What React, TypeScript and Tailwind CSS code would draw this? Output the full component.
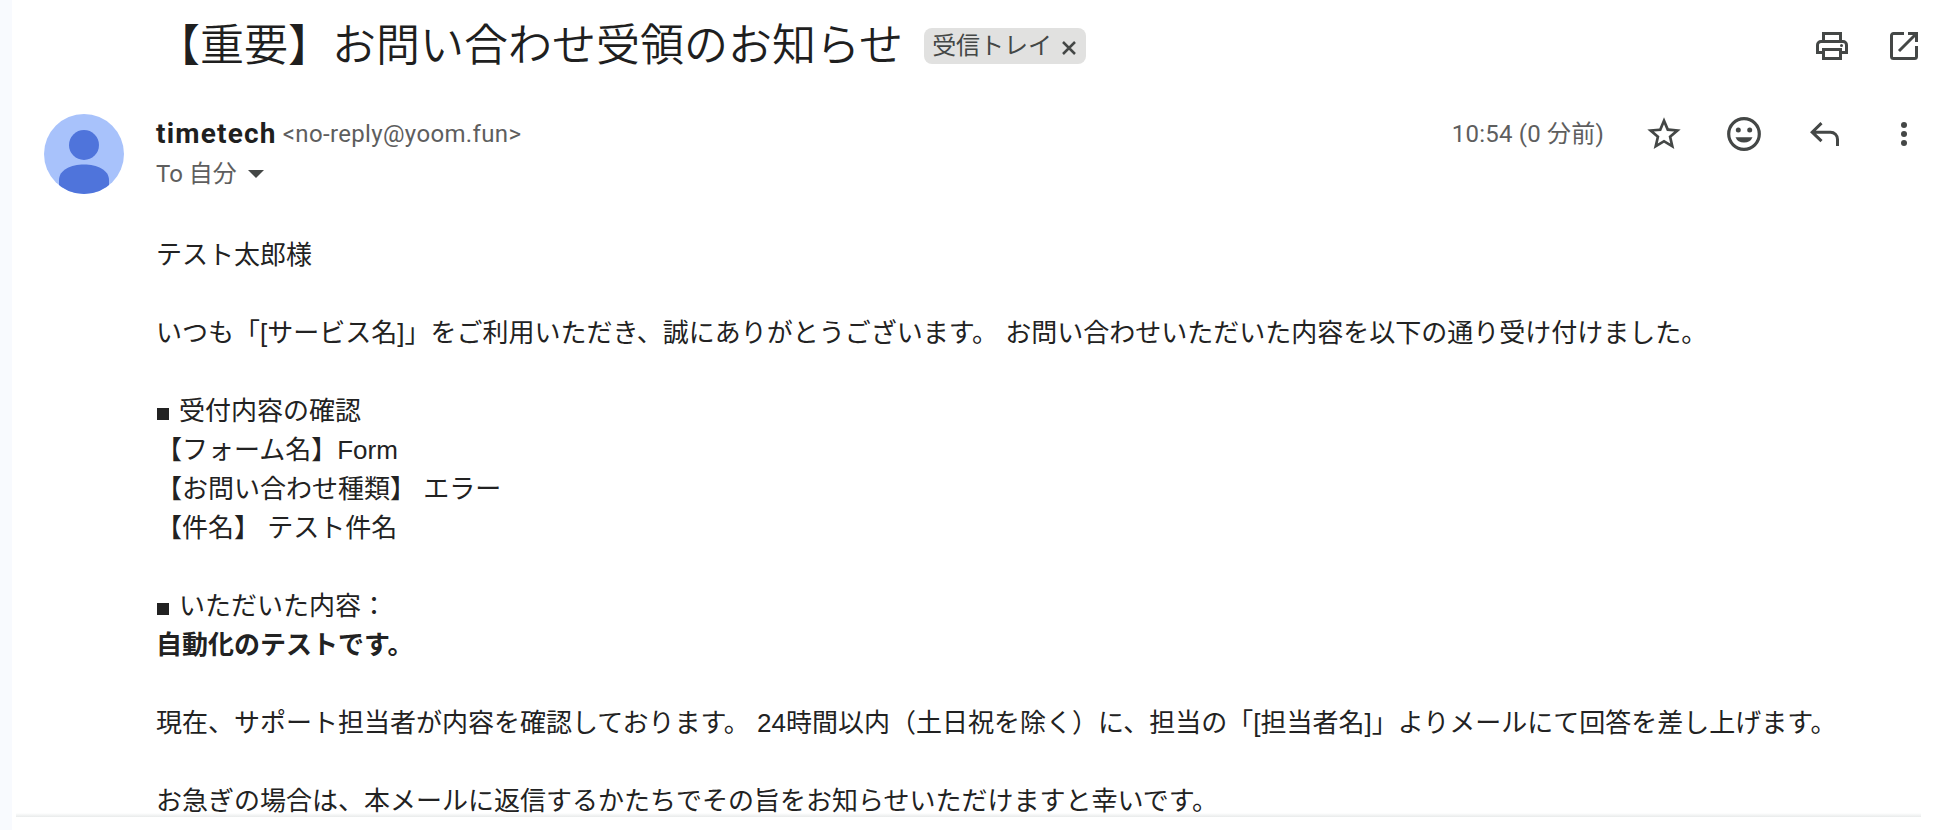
const bodyLines = [
  { text: "テスト太郎様" },
  { text: "" },
  {
    text: "いつも「[サービス名]」をご利用いただき、誠にありがとうございます。 お問い合わせいただいた内容を以下の通り受け付けました。",
  },
  { text: "" },
  { text: "受付内容の確認", marker: true },
  { text: "【フォーム名】Form" },
  { text: "【お問い合わせ種類】 エラー" },
  { text: "【件名】 テスト件名" },
  { text: "" },
  { text: "いただいた内容：", marker: true },
  { text: "自動化のテストです。", bold: true },
  { text: "" },
  {
    text: "現在、サポート担当者が内容を確認しております。 24時間以内（土日祝を除く）に、担当の「[担当者名]」よりメールにて回答を差し上げます。",
  },
  { text: "" },
  { text: "お急ぎの場合は、本メールに返信するかたちでその旨をお知らせいただけますと幸いです。" },
]

function Avatar() {
  return (
    <svg viewBox="0 0 80 80" className="h-20 w-20 shrink-0">
      <clipPath id="avatar">
        <circle cx="40" cy="40" r="40" />
      </clipPath>
      <g clipPath="url(#avatar)">
        <rect width="80" height="80" fill="#a8c2fb" />
        <circle cx="40" cy="31" r="15" fill="#4f74db" />
        <path d="M15 80V66c0-10 12-15.500 25-15.500S65 56 65 66v14z" fill="#4f74db" />
      </g>
    </svg>
  )
}

function PrintIcon() {
  return (
    <svg viewBox="0 0 32 28" className="h-7 w-8" fill="none" stroke="currentColor" strokeWidth="3">
      <path d="M7.500 9V1.500h17V9" />
      <path d="M7.500 20.500h-6V13a3.500 3.500 0 0 1 3.500-3.500h22a3.500 3.500 0 0 1 3.500 3.500v7.500h-6" />
      <path d="M7.500 17.500h17v9h-17z" />
      <circle cx="25.500" cy="13.500" r="1.500" fill="currentColor" stroke="none" />
    </svg>
  )
}

function OpenIcon() {
  return (
    <svg viewBox="0 0 28 28" className="h-7 w-7" fill="none" stroke="currentColor" strokeWidth="3">
      <path d="M14 1.500H3.500a2 2 0 0 0-2 2v21a2 2 0 0 0 2 2h21a2 2 0 0 0 2-2V14" />
      <path d="M18 1.500h8.500V10M26 2L9 19" />
    </svg>
  )
}

function StarIcon() {
  return (
    <svg viewBox="0 0 24 24" className="h-10 w-10" fill="currentColor">
      <path d="M22 9.240l-7.190-.620L12 2 9.190 8.630 2 9.240l5.460 4.730L5.820 21 12 17.270 18.180 21l-1.630-7.030L22 9.240zM12 15.400l-3.760 2.270 1-4.280-3.320-2.880 4.380-.380L12 6.100l1.710 4.040 4.380.380-3.320 2.880 1 4.280L12 15.400z" />
    </svg>
  )
}

function SmileIcon() {
  return (
    <svg viewBox="0 0 34 34" className="h-[34px] w-[34px]" fill="currentColor">
      <circle cx="17" cy="17" r="15.300" fill="none" stroke="currentColor" strokeWidth="3.200" />
      <circle cx="11.300" cy="13" r="2.500" />
      <circle cx="22.700" cy="13" r="2.500" />
      <path d="M8.500 20.200h17a9 8 0 0 1-17 0z" />
    </svg>
  )
}

function ReplyIcon() {
  return (
    <svg viewBox="0 0 30 24" className="h-6 w-[30px]" fill="none" stroke="currentColor" strokeWidth="3">
      <path d="M11.500 1.200L2.200 10.200l9.300 9M2.500 10.200h18a7 7 0 0 1 7 7V24" />
    </svg>
  )
}

function MoreIcon() {
  return (
    <svg viewBox="0 0 6 24" className="h-6 w-1.5" fill="currentColor">
      <circle cx="3" cy="3" r="3" />
      <circle cx="3" cy="12" r="3" />
      <circle cx="3" cy="21" r="3" />
    </svg>
  )
}

export default function App() {
  return (
    <div className="flex h-[830px] w-[1945px] overflow-hidden bg-[#f8fafe] pl-3 font-['Liberation_Sans','Noto_Sans_CJK_JP',sans-serif] text-[#1f1f1f]">
      <main className="flex grow flex-col bg-white">
        <header className="flex h-[92px] items-center pr-[27px] pl-36 text-[#444746]">
          <h1 className="pb-2 text-[44px] leading-[60px] font-[350] whitespace-nowrap text-[#1f1f1f] font-['Noto_Sans_CJK_JP',sans-serif]">
            【重要】お問い合わせ受領のお知らせ
          </h1>
          <div className="ml-[21px] flex h-9 w-[162px] items-center rounded-lg bg-[#e1e1e0] pl-2 text-2xl">
            <span className="leading-9">受信トレイ</span>
            <svg viewBox="0 0 14 14" className="mt-1 ml-2.5 h-3.5 w-3.5" stroke="currentColor" strokeWidth="2.500">
              <path d="M1 1l12 12M13 1L1 13" />
            </svg>
          </div>
          <div className="ml-auto flex items-center gap-[42px]">
            <PrintIcon />
            <OpenIcon />
          </div>
        </header>

        <section className="flex h-[142px] items-start pt-[22px] pr-[38px] pl-8 text-2xl text-[#5e5e5e] font-[Roboto,'Noto_Sans_CJK_JP',sans-serif]">
          <Avatar />
          <div className="ml-8">
            <div className="flex h-10 items-center whitespace-nowrap">
              <span className="text-[28px] font-bold tracking-[1.2px] text-[#1f1f1f]">timetech</span>
              <span className="ml-1.5 tracking-[0.35px]">&lt;no-reply@yoom.fun&gt;</span>
            </div>
            <div className="flex h-10 items-center">
              <span>To 自分</span>
              <svg viewBox="0 0 16 8" className="ml-[11px] h-2 w-4" fill="#444746">
                <path d="M0 0h16L8 8z" />
              </svg>
            </div>
          </div>
          <div className="ml-auto flex h-10 items-center text-[#444746]">
            <span className="mr-10 tracking-[0.2px] text-[#5e5e5e]">10:54 (0 分前)</span>
            <StarIcon />
            <span className="ml-[43px]">
              <SmileIcon />
            </span>
            <span className="ml-[49px]">
              <ReplyIcon />
            </span>
            <span className="ml-[61px]">
              <MoreIcon />
            </span>
          </div>
        </section>

        <article className="h-[579px] shrink-0 pt-0.5 pl-36 text-[26px] leading-[39px] whitespace-nowrap text-[#222]">
          {bodyLines.map((line, i) => (
            <p key={i} className={line.bold ? "h-[39px] font-bold" : "h-[39px]"}>
              {line.marker && <span className="mr-2.5 ml-px inline-block h-3 w-3 bg-[#222]"></span>}
              {line.text}
            </p>
          ))}
        </article>
        <div className="mr-6 ml-1 h-1 shrink-0 bg-linear-to-b from-transparent to-[#e9ebeb]"></div>
      </main>
    </div>
  )
}
